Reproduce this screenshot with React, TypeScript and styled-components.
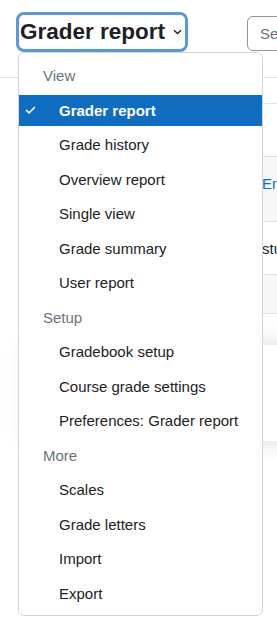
import styled, { createGlobalStyle } from 'styled-components'

type MenuEntry =
  | { kind: 'header'; label: string }
  | { kind: 'item'; label: string; active?: boolean }

const MENU: MenuEntry[] = [
  { kind: 'header', label: 'View' },
  { kind: 'item', label: 'Grader report', active: true },
  { kind: 'item', label: 'Grade history' },
  { kind: 'item', label: 'Overview report' },
  { kind: 'item', label: 'Single view' },
  { kind: 'item', label: 'Grade summary' },
  { kind: 'item', label: 'User report' },
  { kind: 'header', label: 'Setup' },
  { kind: 'item', label: 'Gradebook setup' },
  { kind: 'item', label: 'Course grade settings' },
  { kind: 'item', label: 'Preferences: Grader report' },
  { kind: 'header', label: 'More' },
  { kind: 'item', label: 'Scales' },
  { kind: 'item', label: 'Grade letters' },
  { kind: 'item', label: 'Import' },
  { kind: 'item', label: 'Export' },
]

const GlobalStyle = createGlobalStyle`
  html, body {
    margin: 0;
    padding: 0;
    background: #fff;
  }
  body {
    font-family: "Liberation Sans", Arial, sans-serif;
    color: #1d2125;
  }
`

const Page = styled.div`
  position: relative;
  width: 277px;
  height: 630px;
  overflow: hidden;
  background: #fff;
`

const NavBar = styled.div`
  display: flex;
  align-items: center;
  height: 78px;
  box-sizing: border-box;
  padding: 0 0 14px 16px;
  border-bottom: 1px solid #dee2e6;
  white-space: nowrap;
`

const SelectButton = styled.button`
  display: flex;
  align-items: center;
  gap: 8px;
  height: 40px;
  box-sizing: border-box;
  padding: 0 3px 0 1px;
  border: 3px solid #5a99d3;
  border-radius: 8px;
  background: #fff;
  color: #1d2125;
  font-family: inherit;
  font-size: 22.5px;
  font-weight: 700;
  cursor: pointer;
`

const Divider = styled.div`
  width: 1px;
  height: 39px;
  margin: 0 32px 0 27px;
  background: #dee2e6;
`

const SearchBox = styled.div`
  flex-shrink: 0;
  width: 200px;
  height: 35px;
  box-sizing: border-box;
  display: flex;
  align-items: center;
  padding-left: 12px;
  margin-top: 3px;
  border: 1px solid #8f959e;
  border-radius: 6px;
  color: #6a737b;
  font-size: 15px;
`

const Table = styled.div`
  margin: 25px 0 0 40px;
  width: 400px;
  border-bottom: 1px solid #dee2e6;
`

const Row = styled.div<{ $height: number; $shaded?: boolean }>`
  display: grid;
  grid-template-columns: 222px 1fr;
  align-items: center;
  height: ${({ $height }) => $height}px;
  box-sizing: border-box;
  border-top: 1px solid #dee2e6;
  background: ${({ $shaded }) => ($shaded ? '#f6f7f9' : '#fff')};
  font-size: 15px;
  white-space: nowrap;
`

const HeaderLink = styled.span`
  color: #0f6cbf;
  padding-bottom: 12px;
`

const Popover = styled.div`
  position: absolute;
  top: 345px;
  left: 28px;
  width: 320px;
  height: 96px;
  background: #fff;
  box-shadow: 0 0 24px rgba(0, 0, 0, 0.13);
`

const Menu = styled.ul`
  position: absolute;
  top: 52px;
  left: 18px;
  width: 245px;
  box-sizing: border-box;
  margin: 0;
  padding: 7px 0 6px;
  list-style: none;
  background: #fff;
  border: 1px solid #d3d5d8;
  border-radius: 6px;
`

const GroupHeader = styled.li`
  display: flex;
  align-items: center;
  height: 31px;
  margin-bottom: 3.5px;
  padding-left: 24px;
  color: #6a737b;
  font-size: 15px;
`

const MenuItem = styled.li<{ $active?: boolean }>`
  display: flex;
  align-items: center;
  height: 31px;
  margin-bottom: 3.5px;
  padding-left: 6px;
  font-size: 15px;
  font-weight: ${({ $active }) => ($active ? 700 : 400)};
  color: ${({ $active }) => ($active ? '#fff' : '#1d2125')};
  background: ${({ $active }) => ($active ? '#0f6cbf' : 'transparent')};

  &:last-child {
    margin-bottom: 0;
  }
`

const CheckSlot = styled.span`
  display: inline-flex;
  width: 34px;
  flex-shrink: 0;
`

const Chevron = () => (
  <svg width="9" height="6" viewBox="0 0 9 6" fill="none">
    <path d="M1 1.2 L4.5 4.6 L8 1.2" stroke="#1d2125" strokeWidth="1.4" />
  </svg>
)

const Check = () => (
  <svg width="11" height="8" viewBox="0 0 11 8" fill="none">
    <path d="M1 4 L4 6.8 L10 1" stroke="#fff" strokeWidth="1.6" />
  </svg>
)

export default function App() {
  return (
    <Page>
      <GlobalStyle />
      <NavBar>
        <SelectButton type="button">
          Grader report
          <Chevron />
        </SelectButton>
        <Divider />
        <SearchBox>Search users</SearchBox>
      </NavBar>

      <Table>
        <Row $height={53} />
        <Row $height={65} $shaded>
          <span />
          <HeaderLink>Email address</HeaderLink>
        </Row>
        <Row $height={53}>
          <span />
          <span>student1@example.com</span>
        </Row>
        <Row $height={39} $shaded />
      </Table>

      <Popover />

      <Menu role="listbox">
        {MENU.map(entry =>
          entry.kind === 'header' ? (
            <GroupHeader key={entry.label}>{entry.label}</GroupHeader>
          ) : (
            <MenuItem key={entry.label} $active={entry.active} aria-selected={entry.active}>
              <CheckSlot>{entry.active ? <Check /> : null}</CheckSlot>
              {entry.label}
            </MenuItem>
          ),
        )}
      </Menu>
    </Page>
  )
}
